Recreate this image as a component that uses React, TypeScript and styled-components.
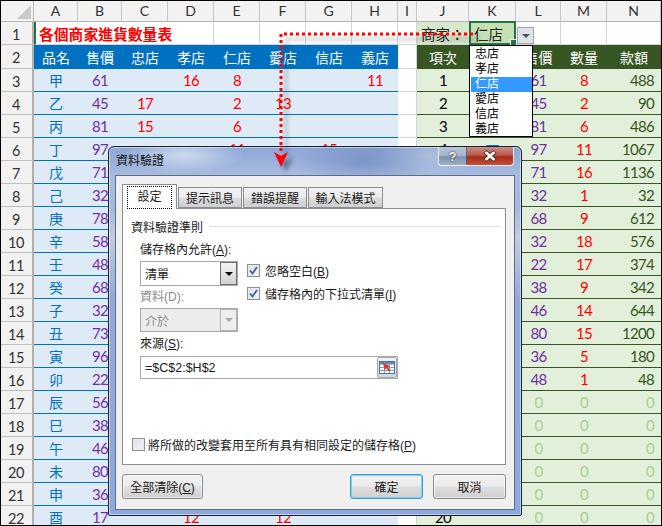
import React from "react";
import styled, { createGlobalStyle, css } from "styled-components";

const Global = createGlobalStyle`
  html, body { margin: 0; padding: 0; background: #fff; }
  * { box-sizing: border-box; }
`;

const CJK = `"Liberation Sans", "Noto Sans CJK TC", sans-serif`;
const NUM = `Lato, "Noto Sans CJK TC", sans-serif`;

const Frame = styled.div`
  position: relative;
  width: 662px;
  height: 526px;
  overflow: hidden;
  font-family: ${NUM};
  &::after {
    content: "";
    position: absolute;
    inset: 0;
    border: 1px solid #000;
    pointer-events: none;
    z-index: 9;
  }
`;

const Sheet = styled.div`
  display: grid;
  grid-template-columns: 34px 44px 44px 46px 46px 46px 46px 46px 46px 19px 52px 47px 45px 46px 54px;
  grid-template-rows: 22px 23px 24px;
  grid-auto-rows: 23px;
  width: 661px;
`;

const centre = css`
  display: flex;
  align-items: center;
  justify-content: center;
`;

const Corner = styled.div`
  position: relative;
  background: #f2f2f2;
  border-right: 1px solid #b5b5b5;
  border-bottom: 1px solid #b5b5b5;
  &::before {
    content: "";
    position: absolute;
    left: 17px;
    top: 5px;
    border-style: solid;
    border-width: 0 0 14px 14px;
    border-color: transparent transparent #c9c9c9 transparent;
  }
`;

const ColHead = styled.div`
  ${centre}
  background: #f2f2f2;
  border-right: 1px solid #c6c6c6;
  border-bottom: 1px solid #b5b5b5;
  color: #333;
  font-size: 14px;
`;

const RowHead = styled.div`
  ${centre}
  background: #f2f2f2;
  border-right: 2px solid #b0b0b0;
  border-bottom: 1px solid #c0c0c0;
  color: #333;
  font-size: 14.5px;
  letter-spacing: -0.5px;
  padding-top: 2px;
`;

const Blank = styled.div`
  background: #fff;
  border-right: 1px solid #d4d4d4;
  border-bottom: 1px solid #d4d4d4;
`;

const TitleCell = styled.div`
  display: flex;
  align-items: center;
  grid-column: span 4;
  padding-left: 3px;
  background: #fff;
  border-left: 2px solid #217346;
  border-right: 1px solid #d4d4d4;
  border-bottom: 1px solid #d4d4d4;
  color: #ff0000;
  font-family: ${CJK};
  font-size: 14.8px;
  font-weight: 700;
  white-space: nowrap;
`;

const FilterLabel = styled.div`
  display: flex;
  align-items: center;
  padding-left: 4px;
  background: #d8e8cc;
  border-bottom: 1px solid #d4d4d4;
  color: #222;
  font-family: ${CJK};
  font-size: 14.5px;
  white-space: nowrap;
`;

const FilterValue = styled.div`
  position: relative;
  display: flex;
  align-items: center;
  padding-left: 3px;
  background: #c6e0b4;
  border: 2px solid #217346;
  color: #222;
  font-family: ${CJK};
  font-size: 14.5px;
  white-space: nowrap;
  margin-top: -1px;
  &::after {
    content: "";
    position: absolute;
    right: -3px;
    bottom: -3px;
    width: 5px;
    height: 5px;
    background: #217346;
    border: 1px solid #fff;
  }
`;

const BandHead = styled.div<{ $bg: string }>`
  ${centre}
  background: ${(p) => p.$bg};
  color: #fff;
  font-family: ${CJK};
  font-size: 14px;
  white-space: nowrap;
`;

const Value = styled.div<{ $bg: string; $rule: string; $color: string; $right?: boolean; $cjk?: boolean }>`
  display: flex;
  align-items: center;
  justify-content: ${(p) => (p.$right ? "flex-end" : "center")};
  padding-right: ${(p) => (p.$right ? "7px" : "0")};
  background: ${(p) => p.$bg};
  border-bottom: 1px solid ${(p) => p.$rule};
  color: ${(p) => p.$color};
  font-family: ${(p) => (p.$cjk ? CJK : NUM)};
  font-size: ${(p) => (p.$cjk ? "14px" : "15px")};
  letter-spacing: ${(p) => (p.$cjk ? "0" : "-0.7px")};
  white-space: nowrap;
`;

const FilterButton = styled.div`
  position: absolute;
  left: 517px;
  top: 27px;
  width: 17px;
  height: 17px;
  display: flex;
  align-items: center;
  justify-content: center;
  background: #dfe2e8;
  border: 1px solid #a2a5ab;
  &::before {
    content: "";
    border-style: solid;
    border-width: 4px 4px 0 4px;
    border-color: #555 transparent transparent transparent;
  }
`;

const ListBox = styled.div`
  position: absolute;
  left: 469px;
  top: 45px;
  width: 64px;
  height: 92px;
  padding: 1px 1px;
  display: flex;
  flex-direction: column;
  background: #fff;
  border: 1px solid #000;
  z-index: 2;
`;

const ListItem = styled.div<{ $on?: boolean }>`
  height: 15px;
  line-height: 15px;
  padding-left: 4px;
  width: 61px;
  font-family: ${CJK};
  font-size: 12px;
  color: ${(p) => (p.$on ? "#fff" : "#000")};
  background: ${(p) => (p.$on ? "#3399ff" : "transparent")};
`;

const Dialog = styled.div`
  position: absolute;
  left: 108px;
  top: 146px;
  width: 414px;
  height: 370px;
  display: flex;
  flex-direction: column;
  border: 1px solid #1c2430;
  border-radius: 6px 6px 2px 2px;
  background:
    radial-gradient(ellipse 60px 18px at 18% 8px, rgba(225, 232, 245, 0.75), transparent),
    radial-gradient(ellipse 70px 24px at 62% 14px, rgba(95, 125, 180, 0.55), transparent),
    radial-gradient(ellipse 60px 20px at 78% 10px, rgba(185, 200, 225, 0.7), transparent),
    linear-gradient(180deg, #8da6d6 0, #a9bce0 30px, #a4b7e0 60px, #c0cde0 90px, #93a9dc 150px, #8fa9de 100%);
  box-shadow: inset 0 0 0 1px rgba(255, 255, 255, 0.45);
  z-index: 3;
`;

const TitleBar = styled.div`
  position: relative;
  height: 28px;
  padding: 5px 0 0 7px;
  flex: none;
  font-family: ${CJK};
  font-size: 12px;
  line-height: 18px;
  color: #111;
`;

const Caption = styled.div`
  position: absolute;
  right: 7px;
  top: 0;
  height: 19px;
  display: flex;
  border: 1px solid rgba(255, 255, 255, 0.85);
  border-top: none;
  border-radius: 0 0 4px 4px;
  overflow: hidden;
`;

const HelpBtn = styled.div`
  ${centre}
  width: 28px;
  background: linear-gradient(180deg, #b5c3dc 0, #a7b7d2 45%, #7f90ac 55%, #9fb0c8 100%);
  border-right: 1px solid rgba(40, 50, 70, 0.6);
  color: #fff;
  font: 700 13px "Liberation Sans", sans-serif;
  text-shadow: 0 0 2px #222, 0 0 1px #222;
`;

const CloseBtn = styled.div`
  ${centre}
  width: 46px;
  background: linear-gradient(180deg, #c98d84 0, #bb5a4d 45%, #a92a18 55%, #c4503a 100%);
`;

const Client = styled.div`
  flex: 1;
  margin: 0 6px 5px 6px;
  padding: 8px 8px 0 6px;
  display: flex;
  flex-direction: column;
  background: #f0f0f0;
  border: 1px solid #5f6d80;
  font-family: ${CJK};
  font-size: 12px;
  color: #1a1a1a;
`;

const TabStrip = styled.div`
  display: flex;
  align-items: flex-end;
  height: 25px;
  padding-left: 0;
  position: relative;
  z-index: 1;
  margin-bottom: -1px;
`;

const Tab = styled.div<{ $w: number; $on?: boolean }>`
  ${centre}
  width: ${(p) => p.$w}px;
  height: ${(p) => (p.$on ? 25 : 21)}px;
  margin-right: 1px;
  margin-bottom: ${(p) => (p.$on ? 0 : 1)}px;
  border: 1px solid #8c8e94;
  border-bottom: ${(p) => (p.$on ? "none" : "1px solid #8c8e94")};
  background: ${(p) => (p.$on ? "#fff" : "linear-gradient(180deg, #f3f3f3 0, #ebebeb 45%, #dcdcdc 55%, #cfcfcf 100%)")};
`;

const FocusBox = styled.span`
  padding: 2px 9px 3px;
  outline: 1px dotted #000;
  background: #fff;
  line-height: 16px;
`;

const Panel = styled.div`
  height: 257px;
  padding: 8px 6px 0 8px;
  display: flex;
  flex-direction: column;
  background: #fff;
  border: 1px solid #8c8e94;
`;

const GroupHead = styled.div`
  display: flex;
  align-items: center;
  gap: 6px;
  height: 18px;
  white-space: nowrap;
  &::after {
    content: "";
    flex: 1;
    height: 1px;
    background: #d5dfe5;
  }
`;

const RuleGrid = styled.div`
  display: grid;
  grid-template-columns: 98px 1fr;
  column-gap: 9px;
  margin: 6px 0 0 9px;
`;

const Stack = styled.div`
  display: flex;
  flex-direction: column;
`;

const Label = styled.div<{ $dim?: boolean; $top?: number }>`
  height: 18px;
  line-height: 18px;
  white-space: nowrap;
  margin-top: ${(p) => p.$top ?? 0}px;
  color: ${(p) => (p.$dim ? "#8a8a8a" : "inherit")};
`;

const SourceLabel = styled(Label)`
  margin: 3px 0 0 9px;
`;

const Combo = styled.div<{ $dim?: boolean; $h: number }>`
  display: flex;
  align-items: stretch;
  height: ${(p) => p.$h}px;
  margin-top: 2px;
  padding-left: 4px;
  border: 1px solid #a8a8a8;
  background: ${(p) => (p.$dim ? "#ececec" : "#fff")};
  color: ${(p) => (p.$dim ? "#8f8f8f" : "inherit")};
  span { flex: 1; align-self: center; }
`;

const ComboArrow = styled.div<{ $dim?: boolean }>`
  ${centre}
  width: 17px;
  border: 1px solid ${(p) => (p.$dim ? "#b4b4b4" : "#6e6e6e")};
  background: ${(p) => (p.$dim ? "#efefef" : "linear-gradient(180deg, #f4f4f4, #d2d2d2)")};
  &::before {
    content: "";
    border-style: solid;
    border-width: 4px 4px 0 4px;
    border-color: ${(p) => (p.$dim ? "#a8a8a8" : "#000")} transparent transparent transparent;
  }
`;

const Checks = styled.div`
  display: flex;
  flex-direction: column;
  gap: 10px;
  padding-top: 23px;
`;

const CheckRow = styled.div`
  display: flex;
  align-items: center;
  gap: 5px;
  height: 13px;
  white-space: nowrap;
`;

const Box = styled.span`
  ${centre}
  width: 13px;
  height: 13px;
  flex: none;
  border: 1px solid #8e8f8f;
  background: linear-gradient(135deg, #dcdfe6, #f6f6f8);
  box-shadow: inset 0 0 0 1px #e8e9ee;
`;

const SourceRow = styled.div`
  display: flex;
  height: 23px;
  margin: 3px 0 0 9px;
  width: 258px;
  border: 1px solid #a8a8a8;
  align-items: center;
  padding-left: 4px;
  font-size: 12.5px;
  span { flex: 1; }
`;

const RefButton = styled.div`
  ${centre}
  width: 20px;
  height: 21px;
  border: 1px solid #a9a9a9;
  border-radius: 2px;
  background: linear-gradient(180deg, #f0f3f8, #cfd6e2);
`;

const ApplyRow = styled(CheckRow)`
  margin-top: 59px;
  margin-left: 1px;
  gap: 3px;
`;

const Footer = styled.div`
  display: flex;
  gap: 10px;
  margin-top: 9px;
`;

const Btn = styled.div<{ $w: number; $primary?: boolean; $push?: boolean }>`
  ${centre}
  width: ${(p) => p.$w}px;
  height: 25px;
  margin-right: ${(p) => (p.$push ? "auto" : "0")};
  border: 1px solid ${(p) => (p.$primary ? "#3c9fd2" : "#8a8a8a")};
  border-radius: 3px;
  background: linear-gradient(180deg, #f3f3f3 0, #ebebeb 45%, #dddddd 55%, #cfcfcf 100%);
  box-shadow: ${(p) => (p.$primary ? "inset 0 0 0 1px #7fd0f2" : "inset 0 0 0 1px rgba(255,255,255,.6)")};
`;

const ArrowSvg = styled.svg`
  position: absolute;
  left: 260px;
  top: 20px;
  width: 225px;
  height: 160px;
  z-index: 5;
  filter: drop-shadow(5px 5px 2px rgba(0, 0, 0, 0.38));
`;

const LEFT_BG = "#deeaf6";
const LEFT_RULE = "#0070c0";
const RIGHT_BG = "#e2efda";
const RIGHT_RULE = "#375623";
const PURPLE = "#7030a0";
const RED = "#ff0000";
const BLUE = "#0070c0";

const columns = "ABCDEFGHIJKLMN".split("");
const stores = ["忠店", "孝店", "仁店", "愛店", "信店", "義店"];
const names = "甲乙丙丁戊己庚辛壬癸子丑寅卯辰巳午未申酉".split("");
const prices = [61, 45, 81, 97, 71, 32, 78, 58, 48, 68, 32, 73, 96, 22, 56, 38, 46, 80, 36, 17];
const sales: Record<number, (number | "")[]> = {
  0: ["", 16, 8, "", "", 11],
  1: [17, "", 2, 13, "", ""],
  2: [15, "", 6, "", "", ""],
  3: ["", "", 11, "", 15, ""],
  19: ["", 12, "", 12, "", ""],
};
const picked: [number, number][] = [
  [61, 8],
  [45, 2],
  [81, 6],
  [97, 11],
  [71, 16],
  [32, 1],
  [68, 9],
  [32, 18],
  [22, 17],
  [38, 9],
  [46, 14],
  [80, 15],
  [36, 5],
  [48, 1],
];

const Check = () => (
  <Box>
    <svg width="9" height="9" viewBox="0 0 9 9">
      <path d="M1 4.5 L3.5 7.5 L8 1" fill="none" stroke="#4a5f97" strokeWidth="1.8" />
    </svg>
  </Box>
);

export default function App() {
  return (
    <Frame>
      <Global />
      <Sheet>
        <Corner />
        {columns.map((c) => (
          <ColHead key={c}>{c}</ColHead>
        ))}

        <RowHead>1</RowHead>
        <TitleCell>各個商家進貨數量表</TitleCell>
        {[0, 1, 2, 3, 4].map((i) => (
          <Blank key={i} />
        ))}
        <FilterLabel>商家：</FilterLabel>
        <FilterValue>仁店</FilterValue>
        <Blank />
        <Blank />
        <Blank />

        <RowHead>2</RowHead>
        {["品名", "售價", ...stores].map((t) => (
          <BandHead key={t} $bg={BLUE}>{t}</BandHead>
        ))}
        <Blank />
        {["項次", "", "售價", "數量", "款額"].map((t, i) => (
          <BandHead key={i} $bg={RIGHT_RULE}>{t}</BandHead>
        ))}

        {names.map((name, i) => {
          const row = picked[i];
          const left = { $bg: LEFT_BG, $rule: LEFT_RULE };
          const right = { $bg: RIGHT_BG, $rule: RIGHT_RULE };
          const zero = "#a9d08e";
          const showIndex = i <= 3 || i === 19;
          return (
            <React.Fragment key={name}>
              <RowHead>{i + 3}</RowHead>
              <Value {...left} $color={BLUE} $cjk>{name}</Value>
              <Value {...left} $color={PURPLE}>{prices[i]}</Value>
              {(sales[i] ?? ["", "", "", "", "", ""]).map((v, j) => (
                <Value key={j} {...left} $color={RED}>{v}</Value>
              ))}
              <Blank />
              <Value {...right} $color="#000">{showIndex ? i + 1 : ""}</Value>
              <Value {...right} $color={BLUE} $cjk>{i === 3 ? "丁" : ""}</Value>
              <Value {...right} $color={row ? PURPLE : zero}>{row ? row[0] : 0}</Value>
              <Value {...right} $color={row ? RED : zero}>{row ? row[1] : 0}</Value>
              <Value {...right} $color={row ? RIGHT_RULE : zero} $right>{row ? row[0] * row[1] : 0}</Value>
            </React.Fragment>
          );
        })}
      </Sheet>

      <FilterButton />
      <ListBox>
        {stores.map((s) => (
          <ListItem key={s} $on={s === "仁店"}>{s}</ListItem>
        ))}
      </ListBox>

      <Dialog>
        <TitleBar>
          資料驗證
          <Caption>
            <HelpBtn>?</HelpBtn>
            <CloseBtn>
              <svg width="14" height="12" viewBox="0 0 14 12">
                <path d="M2 1.5 L12 10.5 M12 1.5 L2 10.5" stroke="#4a2a24" strokeWidth="4.4" />
                <path d="M2.5 2 L11.5 10 M11.5 2 L2.5 10" stroke="#fff" strokeWidth="2.6" />
              </svg>
            </CloseBtn>
          </Caption>
        </TitleBar>
        <Client>
          <TabStrip>
            <Tab $w={55} $on><FocusBox>設定</FocusBox></Tab>
            <Tab $w={64}>提示訊息</Tab>
            <Tab $w={64}>錯誤提醒</Tab>
            <Tab $w={75}>輸入法模式</Tab>
          </TabStrip>
          <Panel>
            <GroupHead>資料驗證準則</GroupHead>
            <RuleGrid>
              <Stack>
                <Label>儲存格內允許(<u>A</u>):</Label>
                <Combo $h={25}>
                  <span>清單</span>
                  <ComboArrow />
                </Combo>
                <Label $dim $top={2}>資料(D):</Label>
                <Combo $dim $h={24}>
                  <span>介於</span>
                  <ComboArrow $dim />
                </Combo>
              </Stack>
              <Checks>
                <CheckRow><Check /><span>忽略空白(<u>B</u>)</span></CheckRow>
                <CheckRow><Check /><span>儲存格內的下拉式清單(<u>I</u>)</span></CheckRow>
              </Checks>
            </RuleGrid>
            <SourceLabel>來源(<u>S</u>):</SourceLabel>
            <SourceRow>
              <span>=$C$2:$H$2</span>
              <RefButton>
                <svg width="16" height="15" viewBox="0 0 16 15">
                  <rect x="0.5" y="1.5" width="15" height="12" fill="#fff" stroke="#4f6f9f" />
                  <rect x="1" y="2" width="14" height="2.5" fill="#5f83b8" />
                  <path d="M1 7.5H15M1 10.5H15M5.5 2V13M10.5 2V13" stroke="#7f9cc4" />
                  <path d="M4 3 L11 6 L8.8 7.3 L11.5 10.5 L9.8 11.6 L7.4 8.2 L5.6 10 Z" fill="#d83a20" />
                </svg>
              </RefButton>
            </SourceRow>
            <ApplyRow>
              <Box />
              <span>將所做的改變套用至所有具有相同設定的儲存格(<u>P</u>)</span>
            </ApplyRow>
          </Panel>
          <Footer>
            <Btn $w={81} $push><span>全部清除(<u>C</u>)</span></Btn>
            <Btn $w={73} $primary>確定</Btn>
            <Btn $w={73}>取消</Btn>
          </Footer>
        </Client>
      </Dialog>

      <ArrowSvg viewBox="0 0 225 160">
        <path d="M213 14 H21 V134" fill="none" stroke="#ff0000" strokeWidth="3" strokeDasharray="3 3" />
        <path d="M14 132 L21 136 L28 132 L21 147 Z" fill="#ff0000" />
      </ArrowSvg>
    </Frame>
  );
}
